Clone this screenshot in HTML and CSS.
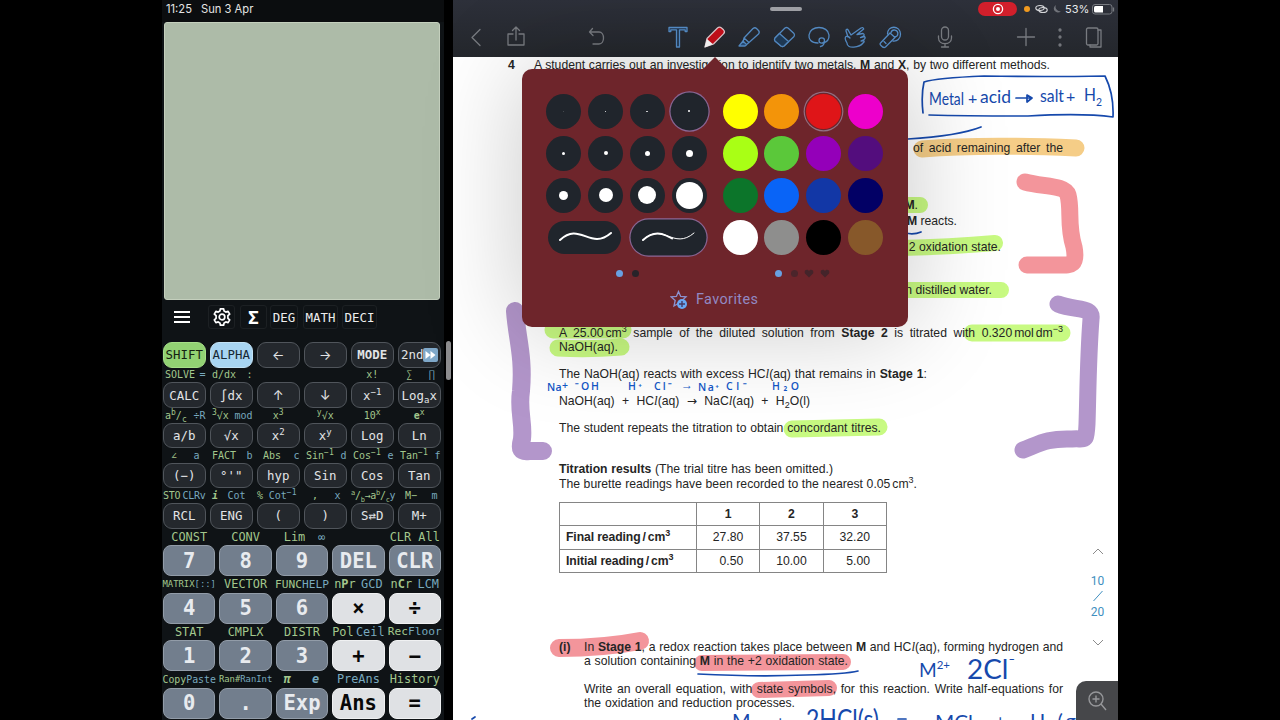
FILE: index.html
```html
<!DOCTYPE html>
<html lang="en">
<head>
    <meta charset="UTF-8">
    <meta name="viewport" content="width=device-width, initial-scale=1.0">
    <title>Calculator and notes</title>
    <link rel="stylesheet" href="styles.css">
</head>
<body>
    <!-- Calculator -->
    <aside class="calculator">
        <div class="clock"><span>11:25</span><span>Sun 3 Apr</span></div>
        <div class="screen"></div>
        <div class="modes">
            <button class="menu"><svg width="18" height="14" viewBox="0 0 18 14"><path d="M1 2h16M1 7h16M1 12h16" stroke="#fff" stroke-width="1.8"/></svg></button>
            <button class="mode-icon"><svg width="20" height="20" viewBox="0 0 20 20" fill="none" stroke="#fff" stroke-width="1.7" stroke-linejoin="round"><path d="M8.4 1.8h3.2l.5 2.3 1.7 1 2.3-.8 1.6 2.8-1.8 1.6v2.6l1.8 1.6-1.6 2.8-2.3-.8-1.7 1-.5 2.3H8.4l-.5-2.3-1.7-1-2.3.8-1.6-2.8 1.8-1.6V8.7L2.3 7.1l1.6-2.8 2.3.8 1.7-1z"/><circle cx="10" cy="10" r="2.8"/></svg></button>
            <button class="mode-icon sigma">Σ</button>
            <button>DEG</button>
            <button class="wide">MATH</button>
            <button class="wide">DECI</button>
        </div>

        <div class="keys small">
            <div class="key shift">SHIFT</div><div class="key alpha">ALPHA</div><div class="key arrow">←</div><div class="key arrow">→</div><div class="key bold">MODE</div>
            <div class="key second">2nd<svg width="15" height="14" viewBox="0 0 15 14"><rect width="15" height="14" rx="2" fill="#7fa8c9"/><path d="M2.5 3l5 4-5 4zM7.5 3l5 4-5 4z" fill="#fff"/></svg></div>

            <div class="label"><i>SOLVE</i><b>=</b></div><div class="label"><i>d/dx</i><i>:</i></div><div class="label"></div><div class="label"></div><div class="label mid"><i>x!</i></div><div class="label inset"><i>∑</i><b>∏</b></div>
            <div class="key">CALC</div><div class="key">∫dx</div><div class="key arrow">↑</div><div class="key arrow">↓</div><div class="key"><span>x<sup>−1</sup></span></div><div class="key"><span>Log<sub>a</sub>x</span></div>

            <div class="label"><i>a<sup>b</sup>/<sub>c</sub></i><b>÷R</b></div><div class="label"><i><sup>3</sup>√x</i><b>mod</b></div><div class="label mid"><i>x<sup>3</sup></i></div><div class="label mid"><i><sup>y</sup>√x</i></div><div class="label mid"><i>10<sup>x</sup></i></div><div class="label mid"><i><strong>e</strong><sup>x</sup></i></div>
            <div class="key">a/b</div><div class="key">√x</div><div class="key"><span>x<sup>2</sup></span></div><div class="key"><span>x<sup>y</sup></span></div><div class="key">Log</div><div class="key">Ln</div>

            <div class="label inset"><i>∠</i><b>a</b></div><div class="label"><i>FACT</i><b>b</b></div><div class="label abs"><i>Abs</i><b>c</b></div><div class="label"><i>Sin<sup>−1</sup></i><b>d</b></div><div class="label"><i>Cos<sup>−1</sup></i><b>e</b></div><div class="label"><i>Tan<sup>−1</sup></i><b>f</b></div>
            <div class="key">(−)</div><div class="key">°'"</div><div class="key">hyp</div><div class="key">Sin</div><div class="key">Cos</div><div class="key">Tan</div>

            <div class="label tight"><i>STO</i><b>CLRv</b></div><div class="label cot"><i><em>i</em></i><b>Cot</b></div><div class="label cot-inverse"><i>%</i><b>Cot<sup>−1</sup></b></div><div class="label inset"><i>,</i><b>x</b></div><div class="label tight"><i><sup>a</sup>/<sub>b</sub>→a<sup>b</sup>/<sub>c</sub></i><b>y</b></div><div class="label memory"><i>M−</i><b>m</b></div>
            <div class="key">RCL</div><div class="key">ENG</div><div class="key">(</div><div class="key">)</div><div class="key">S⇄D</div><div class="key">M+</div>
        </div>

        <div class="keys large">
            <div class="label mid"><i>CONST</i></div><div class="label mid"><i>CONV</i></div><div class="label lim"><i>Lim</i><b>∞</b></div><div class="label"></div><div class="label mid"><i>CLR All</i></div>
            <div class="key num">7</div><div class="key num">8</div><div class="key num">9</div><div class="key num">DEL</div><div class="key num">CLR</div>

            <div class="label mid tiny"><i>MATRIX</i><b>[::]</b></div><div class="label mid"><i>VECTOR</i></div><div class="label mid snug"><i>FUNC</i><b>HELP</b></div><div class="label"><i>n<strong>P</strong>r</i><b>GCD</b></div><div class="label"><i>n<strong>C</strong>r</i><b>LCM</b></div>
            <div class="key num">4</div><div class="key num">5</div><div class="key num">6</div><div class="key op">×</div><div class="key op">÷</div>

            <div class="label mid"><i>STAT</i></div><div class="label mid"><i>CMPLX</i></div><div class="label mid"><i>DISTR</i></div><div class="label tight"><i>Pol</i><b>Ceil</b></div><div class="label mid snug"><i>Rec</i><b>Floor</b></div>
            <div class="key num">1</div><div class="key num">2</div><div class="key num">3</div><div class="key op">+</div><div class="key op">−</div>

            <div class="label mid copy"><i>Copy</i><b>Paste</b></div><div class="label mid tiny"><i>Ran#</i><b>RanInt</b></div><div class="label power"><i><em>π</em></i><b><em>e</em></b></div><div class="label mid"><b>PreAns</b></div><div class="label mid"><i>History</i></div>
            <div class="key num">0</div><div class="key num">.</div><div class="key num">Exp</div><div class="key op">Ans</div><div class="key op">=</div>
        </div>
    </aside>

    <div class="divider"><span></span></div>

    <!-- Notes -->
    <main class="notes">
        <header class="topbar">
            <div class="status">
                <span class="handle"></span>
                <span class="recording"><svg width="12" height="12" viewBox="0 0 12 12"><circle cx="6" cy="6" r="4.6" fill="none" stroke="#fff" stroke-width="1.3"/><circle cx="6" cy="6" r="2" fill="#fff"/></svg></span>
                <span class="mic-dot"></span>
                <svg class="link" width="13" height="10" viewBox="0 0 13 10" fill="none" stroke="#d5d6d9" stroke-width="1.2"><ellipse cx="5" cy="4" rx="4.2" ry="2.5"/><ellipse cx="8" cy="6" rx="4.2" ry="2.5"/></svg>
                <svg class="moon" width="9" height="10" viewBox="0 0 9 10"><path d="M3 1a4 4 0 1 0 5 6A4.3 4.3 0 0 1 3 1z" fill="#70737a"/></svg>
                <span class="percent">53%</span>
                <svg class="battery" width="23" height="11" viewBox="0 0 23 11"><rect x=".5" y=".5" width="19.5" height="9.5" rx="2.5" fill="none" stroke="#777a80"/><path d="M3.5 2H11v6.500H3.500A1.500 1.500 0 0 1 2 7V3.500A1.500 1.500 0 0 1 3.500 2z" fill="#fff"/><path d="M21.5 3.5v4" stroke="#777a80" stroke-width="1.3"/></svg>
            </div>
            <nav class="tools">
                <svg class="grey" viewBox="0 0 24 24"><path d="M16 4.5L8 12.500l8 8"/></svg>
                <svg class="grey share" viewBox="0 0 24 24"><path d="M9 9H4v11h16V9h-5M12 15V2.500M8.500 5.500L12 2l3.500 3.500"/></svg>
                <svg class="grey undo" viewBox="0 0 24 24"><path d="M7.500 3.500L4.500 7l3.500 3.500M4.500 7H14c6 0 6 12 0 12H8"/></svg>
                <svg class="blue text-tool" viewBox="0 0 24 24"><path d="M3 2.500h18v4h-1.800V4.900h-5.700V22h-3V4.900H4.800v1.600H3z"/></svg>
                <svg class="pen" viewBox="0 0 24 24"><path d="M2 22l2-8.500L14.500 3q2-1.800 4 0l2 1.800q2 2 0 4L10.500 19z" fill="#c90f1b" stroke="#e6cfd3" stroke-width="1.200"/><path d="M1.500 22.500L4 14l6 5.300z" fill="#fff"/></svg>
                <svg class="blue" viewBox="0 0 24 24"><path d="M7 13L16 3.500q2-1.500 3.500 0l2 2q1.500 1.800 0 3.500L12 17.500zM7 13l-1 4 3 3 3-2.500"/><path d="M6 16l-4 5h6l1.500-1.500z" fill="#284f7a"/></svg>
                <svg class="blue" viewBox="0 0 24 24"><path d="M3 13L13 3q1.500-1 3 0l6 5.500q1 1.500 0 3L12 21q-1.500 1.200-3 0l-6-5q-1-1.500 0-3z"/><path d="M7.500 8.500l9 8L12 21q-1.500 1-3 0l-6-5q-1-1.500 0-3z" fill="#203c59"/></svg>
                <svg class="blue" viewBox="0 0 24 24"><path d="M11 18C4 18 1.500 14 2 10 3 0 21 0 22 10c.3 4-2 7-6 8"/><path d="M12 15.500c0-3.500 5.500-3.500 5.500 0s-5.500 3.500-5.500 0M17.500 15.500c0 3-1.500 5.500-4 6"/></svg>
                <svg class="blue" viewBox="0 0 24 24"><path d="M5 12L3 6q0-2 1.700-1.700L8 10l10-7q2.500-1 2.700 1L14 9.500l6-1q2 1 .5 2.500l-3 1.500 4-1q1.500 1.500-.5 3l-3 1.500 2.500-.5q1.500 1-.5 2.500C17 22 4 25 4 18q-3-5-1-6.500 2-1 4 1.500"/></svg>
                <svg class="blue" viewBox="0 0 24 24"><path d="M2.500 18L12 8l5 4.500-9.500 9.500q-2 1.500-4.500-1.500-1.500-1.500-.5-2.500z"/><path d="M9.500 9c0-9 12.500-9 13 0 .1 5-3.500 7.500-7.500 7M13 7.500a3.500 3.500 0 1 1 3.500 4.500M6 16.500l2 2"/></svg>
                <svg class="grey mic" viewBox="0 0 24 24"><rect x="8.500" y="2" width="7" height="13" rx="3.500"/><path d="M5.500 11v2c0 7.500 13 7.500 13 0v-2M12 19v3M8.500 22h7"/></svg>
                <svg class="grey plus" viewBox="0 0 24 24"><path d="M12 3.500v17M3.500 12h17"/></svg>
                <svg class="grey dots" viewBox="0 0 24 24"><circle cx="12" cy="5" r="1"/><circle cx="12" cy="12" r="1"/><circle cx="12" cy="20" r="1"/></svg>
                <svg class="grey pages" viewBox="0 0 24 24"><rect x="4.500" y="3" width="11.500" height="17" rx="1.500"/><path d="M16 5h3v17H8v-2"/></svg>
            </nav>
        </header>

        <section class="paper">
            <!-- highlighter strokes, under the text -->
            <svg class="highlights" viewBox="453 57 665 663">
                <g class="green">
                    <path d="M900 205h20M900 248q50-1 95-5M900 290h101" stroke-width="16"/>
                    <path d="M553 330h70M558 348q30 2 63-1" stroke-width="17"/>
                    <path d="M972 333h90M792 429l87-2" stroke-width="17"/>
                </g>
                <path class="orange" d="M922 149q60-5 154-1" stroke-width="17"/>
                <g class="pink">
                    <path d="M1025 182c18 5 40 3 43 13 4 15-1 30 6 52 4 20-5 18-15 18h-32" stroke-width="17"/>
                    <path d="M559 648q45 0 81-7" stroke-width="18"/>
                    <path d="M702 663l141-1M759 690l70-2" stroke-width="16"/>
                </g>
                <g class="purple">
                    <path d="M515 311c2 28 9 45 6 80-3 20 3 32 1 48-3 11-1 13 7 12h14" stroke-width="18"/>
                    <path d="M1058 304c18 7 35 2 33 15-3 40-3 75-4 105-1 19-1 14-15 15-25-1-33 5-49 11" stroke-width="17"/>
                </g>
            </svg>

            <div class="text">
                <p class="question"><strong>4</strong><span>A student carries out an investigation to identify two metals, <strong>M</strong> and <strong>X</strong>, by two different methods.</span></p>
                <p class="acid">of acid remaining after the</p>
                <p class="stage-m"><strong>M</strong>.</p>
                <p class="reacts"><strong>M</strong> reacts.</p>
                <p class="state">2 oxidation state.</p>
                <p class="water">n distilled water.</p>
                <p class="sample">A 25.00<s></s>cm<sup>3</sup> sample of the diluted solution from <strong>Stage 2</strong> is titrated with 0.320<s></s>mol<s></s>dm<sup>−3</sup></p>
                <p>NaOH(aq).</p>
                <p class="para reaction">The NaOH(aq) reacts with excess HC<em>l</em>(aq) that remains in <strong>Stage 1</strong>:</p>
                <p class="para equation">NaOH(aq) + HC<em>l</em>(aq) <span class="yields">→</span> NaC<em>l</em>(aq) + H<sub>2</sub>O(l)</p>
                <p class="para repeats">The student repeats the titration to obtain concordant titres.</p>
                <p class="results"><strong>Titration results</strong> (The trial titre has been omitted.)</p>
                <p class="burette">The burette readings have been recorded to the nearest 0.05<s></s>cm<sup>3</sup>.</p>
                <table>
                    <tr><th></th><th>1</th><th>2</th><th>3</th></tr>
                    <tr><th>Final reading<s></s>/<s></s>cm<sup>3</sup></th><td>27.80</td><td>37.55</td><td>32.20</td></tr>
                    <tr><th>Initial reading<s></s>/<s></s>cm<sup>3</sup></th><td>0.50</td><td>10.00</td><td>5.00</td></tr>
                </table>
                <div class="part">
                    <strong>(i)</strong>
                    <div>
                        <p class="full">In <strong>Stage 1</strong>, a redox reaction takes place between <strong>M</strong> and HC<em>l</em>(aq), forming hydrogen and</p>
                        <p class="containing">a solution containing <strong>M</strong> in the +2 oxidation state.</p>
                        <p class="full write">Write an overall equation, with state symbols, for this reaction. Write half-equations for</p>
                        <p class="processes">the oxidation and reduction processes.</p>
                    </div>
                </div>
            </div>

            <!-- pen notes -->
            <svg class="ink" viewBox="453 57 665 663">
                <path d="M923 113q-2-18 1-31 12-4 60-6 60 1 121 0 9 18 8 41-30-4-85-1-60 0-99-1M908 139q50-3 73-12M905 233q9 2 16-1M698 674q60 3 108 1 40-1 52-4"/>
                <text x="929" y="105" font-size="17" textLength="35" lengthAdjust="spacingAndGlyphs">Metal</text>
                <text x="968" y="104" font-size="16">+</text>
                <text x="980" y="103" font-size="17" textLength="31" lengthAdjust="spacingAndGlyphs">acid</text>
                <path d="M1016 98h15m-4-3l5 3-5 4z"/>
                <text x="1040" y="102" font-size="18" textLength="24" lengthAdjust="spacingAndGlyphs">salt</text>
                <text x="1066" y="102" font-size="16">+</text>
                <text x="1084" y="101" font-size="18" textLength="18" lengthAdjust="spacingAndGlyphs">H<tspan font-size="12" dy="5">2</tspan></text>
                <g class="small-ink">
                    <text x="547" y="391" font-size="10.5" textLength="21">Na<tspan dy="-2">+</tspan></text>
                    <text x="575" y="390" font-size="10.5" textLength="24">⁻OH</text>
                    <text x="628" y="390" font-size="10.5" textLength="14">H⁺</text>
                    <text x="654" y="390" font-size="10.5" textLength="18">Cl⁻</text>
                    <text x="681" y="389" font-size="12" textLength="12">→</text>
                    <text x="698" y="391" font-size="10.5" textLength="21">Na⁺</text>
                    <text x="726" y="390" font-size="10.5" textLength="21">Cl⁻</text>
                    <text x="772" y="390" font-size="10.5" textLength="27">H₂O</text>
                </g>
                <text x="919" y="677" font-size="20" textLength="31" lengthAdjust="spacingAndGlyphs">M<tspan font-size="12" dy="-8">2+</tspan></text>
                <text x="967" y="679" font-size="27" textLength="48" lengthAdjust="spacingAndGlyphs">2Cl<tspan font-size="19" dy="-7">⁻</tspan></text>
                <text x="732" y="728" font-size="20">M</text>
                <text x="775" y="729" font-size="18">+</text>
                <text x="806" y="729" font-size="26" textLength="73" lengthAdjust="spacingAndGlyphs">2HCl(s)</text>
                <path d="M898 719h8M472 719l3-2"/>
                <text x="935" y="729" font-size="20" textLength="38" lengthAdjust="spacingAndGlyphs">MCl</text>
                <text x="995" y="728" font-size="18">+</text>
                <text x="1030" y="728" font-size="20" textLength="54">H₂(g)</text>
            </svg>

            <div class="page-nav">
                <svg width="12" height="8" viewBox="0 0 12 8"><path d="M1 7l5-5 5 5"/></svg>
                <span class="current">10</span>
                <svg width="12" height="12" viewBox="0 0 12 12"><path class="slash" d="M1.500 11L10.500 1"/></svg>
                <span class="total">20</span>
                <svg width="12" height="8" viewBox="0 0 12 8"><path d="M1 1l5 5 5-5"/></svg>
            </div>
            <div class="zoom-button"><svg width="22" height="22" viewBox="0 0 22 22" fill="none" stroke="#96979a" stroke-width="1.4"><circle cx="10" cy="9" r="7"/><path d="M15 14l5 6M10 5.500v7M6.500 9h7"/></svg></div>
        </section>

        <!-- pen settings popup -->
        <div class="popup">
            <div class="pickers">
                <div class="sizes">
                    <span class="size s1"></span><span class="size s2"></span><span class="size s3"></span><span class="size s4 selected"></span>
                    <span class="size s5"></span><span class="size s6"></span><span class="size s7"></span><span class="size s8"></span>
                    <span class="size s9"></span><span class="size s10"></span><span class="size s11"></span><span class="size s12"></span>
                    <span class="stroke"><svg width="54" height="14" viewBox="0 0 54 14"><path d="M2 10C22-9 32 21 53 3" fill="none" stroke="#fff" stroke-width="2" stroke-linecap="round"/></svg></span>
                    <span class="stroke selected"><svg width="54" height="14" viewBox="0 0 54 14"><path d="M2 10C22-9 32 21 53 3" fill="none" stroke="#fff" stroke-linecap="round"/><path d="M2 10Q13 0 25 5.500L31 8.500" fill="none" stroke="#fff" stroke-width="1.900" stroke-linecap="round"/></svg></span>
                </div>
                <div class="colours">
                    <span class="yellow"></span><span class="amber"></span><span class="red selected"></span><span class="magenta"></span>
                    <span class="lime"></span><span class="leaf"></span><span class="violet"></span><span class="indigo"></span>
                    <span class="forest"></span><span class="azure"></span><span class="cobalt"></span><span class="navy"></span>
                    <span class="white"></span><span class="gray"></span><span class="black"></span><span class="brown"></span>
                </div>
            </div>
            <div class="pager">
                <div><span class="on"></span><span></span></div>
                <div><span class="on"></span><span class="faint"></span>
                    <svg width="10" height="9" viewBox="0 0 10 9"><path d="M5 8.500L1 4.500C-.5 1 3.500-.5 5 2 6.500-.5 10.500 1 9 4.500z"/></svg>
                    <svg width="10" height="9" viewBox="0 0 10 9"><path d="M5 8.500L1 4.500C-.5 1 3.500-.5 5 2 6.500-.5 10.500 1 9 4.500z"/></svg>
                </div>
            </div>
            <div class="favorites">
                <svg width="18" height="20" viewBox="0 0 18 20"><path d="M8.500 1.500l2.200 5 5.300.4-4 3.600 1.200 5.500-4.700-2.800L4 16l1.200-5.500-4-3.600 5.200-.4z" fill="none" stroke="#8c92cf" stroke-width="1.300"/><circle cx="12" cy="14" r="5" fill="#69a8f4"/><path d="M12 11v6M9 14h6" stroke="#453a65" stroke-width="1.400"/></svg>
                <span>Favorites</span>
            </div>
        </div>
    </main>
</body>
</html>
```
FILE: styles.css
```css
* {
    box-sizing: border-box;
}

body {
    margin: 0;
    width: 1280px;
    height: 720px;
    overflow: hidden;
    display: flex;
    background: #000;
    font-family: "Liberation Sans", Arial, sans-serif;
}

p {
    margin: 0;
}

sup, sub {
    line-height: 0;
}

/* Calculator */
.calculator {
    width: 282px;
    margin-left: 162px;
    height: 720px;
    overflow: hidden;
    background: #0f1316;
    font-family: "DejaVu Sans Mono", monospace;
}

.clock {
    height: 22px;
    padding: 3px 0 0 4px;
    display: flex;
    gap: 9px;
    background: #0b0d0f;
    color: #e4e4e4;
    font: 11.2px/13px Inter, sans-serif;
}

.screen {
    height: 278px;
    margin: 0 4px 0 2px;
    border: 1px solid #c4cfbd;
    border-radius: 3px;
    background: #adbba8;
}

.modes {
    display: flex;
    align-items: center;
    gap: 5px;
    height: 34px;
    margin: 0 0 8px 7px;
}

.modes button {
    width: 28px;
    height: 24px;
    padding: 0;
    display: flex;
    align-items: center;
    justify-content: center;
    border: 1px solid #1c2023;
    border-radius: 3px;
    background: transparent;
    color: #eee;
    font: 12.4px "DejaVu Sans Mono", monospace;
}

.modes .menu {
    width: 26px;
    margin-right: 8px;
    border: 0;
}

.modes .mode-icon {
    width: 27px;
}

.modes .sigma {
    margin-right: -2px;
    font-size: 18px;
    font-weight: bold;
    color: #fff;
}

.modes .wide {
    width: 35px;
}

.modes .wide + .wide {
    margin-left: -1px;
}

.keys {
    display: grid;
    width: 278px;
    margin-left: 1px;
    color: #e2e4e6;
}

.keys.small {
    grid-template-columns: repeat(6, 42.5px);
    grid-template-rows: 25.6px repeat(4, 14.7px 25.6px);
    column-gap: 4.5px;
}

.keys.large {
    grid-template-columns: repeat(5, 52.4px);
    grid-template-rows: repeat(4, 16.5px 31px);
    column-gap: 4px;
}

.key {
    display: flex;
    align-items: center;
    justify-content: center;
    border: 1.5px solid #50555b;
    border-radius: 9px;
    background: #24282d;
    font-size: 12.4px;
    white-space: nowrap;
}

.key sup, .key sub {
    font-size: 9px;
}

.shift {
    background: #92d273;
    border-color: #a6df88;
    color: #152010;
}

.alpha {
    background: #a8d5f2;
    border-color: #c3e3f6;
    color: #152733;
}

.bold {
    font-weight: bold;
}

.key.arrow {
    font-family: Inter, sans-serif;
    font-size: 13px;
}

.second {
    padding-left: 1px;
}

.large .key {
    font-size: 20.5px;
    font-weight: bold;
    border-radius: 8px;
}

.large .num {
    background: #727e8d;
    border-color: #929ca8;
    color: #e8ebef;
}

.large .op {
    background: #dfe1e4;
    border-color: #f0f1f2;
    color: #080808;
}

/* green text is shift, blue text is alpha */
.label {
    display: flex;
    align-items: center;
    justify-content: space-between;
    padding: 0 0 0 2px;
    font-size: 10px;
    color: #a3c78d;
    white-space: nowrap;
}

.label i, .label b {
    font-style: normal;
    font-weight: normal;
}

.label b {
    color: #78a9be;
}

.label em {
    font-weight: bold;
}

.label sup, .label sub {
    font-size: 8px;
}

.large .label {
    padding: 0 2px;
    font-size: 11.9px;
}

.large .label.mid,
.label.mid {
    justify-content: center;
    padding: 0;
}

.label.inset {
    padding: 0 6px 0 8px;
}

.label.abs {
    padding-left: 6px;
}

.label.cot {
    padding-right: 7px;
}

.label.cot-inverse {
    padding: 0 3px 0 0;
}

.label.memory {
    padding: 0 3px 0 7px;
}

.large .label.tight,
.label.tight {
    padding: 0;
}

.small .label.tight {
    letter-spacing: -0.3px;
}

.label.tight sup, .label.tight sub {
    font-size: 7px;
}

.large .label.lim {
    padding: 0 3px 0 8px;
}

.large .label.power {
    padding: 0 9px 0 8px;
}

.large .tiny {
    font-size: 8.9px;
}

.large .copy {
    font-size: 9.9px;
}

.large .snug {
    font-size: 11.2px;
}

.divider {
    width: 9px;
    padding: 341px 0 0 2px;
}

.divider span {
    display: block;
    width: 5px;
    height: 39px;
    border-radius: 3px;
    background: #8d8d8f;
}

/* Notes app */
.notes {
    position: relative;
    width: 665px;
    height: 720px;
    background: #fff;
}

.topbar {
    height: 57px;
    background: linear-gradient(#2d303a, #24272c);
}

.status {
    display: flex;
    align-items: center;
    height: 18px;
}

.handle {
    width: 32px;
    height: 4px;
    margin-left: 317px;
    border-radius: 2px;
    background: #a2a3a8;
}

.recording {
    display: flex;
    align-items: center;
    justify-content: center;
    width: 39px;
    height: 14px;
    margin-left: 176px;
    border-radius: 7px;
    background: #d11f2b;
}

.mic-dot {
    width: 6px;
    height: 6px;
    margin-left: 7px;
    border-radius: 50%;
    background: #f19a1f;
}

.link {
    margin-left: 5px;
}

.moon {
    margin-left: 5px;
}

.percent {
    margin-left: 3px;
    width: 25px;
    color: #e9eaec;
    font: 11px Inter, sans-serif;
}

.battery {
    margin-left: 2px;
}

.tools {
    display: flex;
    gap: 11.2px;
    margin: 7px 0 0 11px;
}

.tools svg {
    flex: none;
    width: 24px;
    height: 24px;
    fill: none;
    stroke-width: 1.3;
    stroke-linejoin: round;
    stroke-linecap: round;
}

.tools .grey {
    stroke: #787b80;
}

.tools .blue {
    stroke: #5790cb;
}

.tools .text-tool {
    fill: #20354d;
    margin-left: 45px;
}

.share { margin-left: 5px; }
.undo { margin-left: 46px; }
.tools .pen { margin-left: 2px; }
.tools .pen + .blue { margin-left: -1px; }
.mic { margin-left: 20px; }
.plus { margin-left: 46px; }
.dots { margin-left: -1px; }
.pages { margin-left: -1px; }

.paper {
    position: relative;
    height: 663px;
    overflow: hidden;
}

.highlights, .ink {
    position: absolute;
    left: 0;
    top: 0;
    width: 665px;
    height: 663px;
    fill: none;
    stroke-linecap: round;
    stroke-linejoin: round;
}

.green { stroke: #c8fa82; }
.orange { stroke: #f5cd87; }
.pink { stroke: #f3959b; }
.purple { stroke: #b396cb; }

.ink {
    stroke: #1649ac;
    stroke-width: 1.7;
}

.ink text {
    fill: #1649ac;
    stroke: none;
    font-family: Lato, sans-serif;
}

.ink .small-ink text {
    fill: #1458c8;
    font-family: "Open Sans", sans-serif;
    font-weight: 600;
}

.text {
    position: relative;
    padding: 1px 55px 0 106px;
    font-size: 12.2px;
    line-height: 14px;
    color: #252525;
    white-space: nowrap;
}

.text sup, .text sub {
    font-size: 9px;
}

.text em {
    font-family: "Liberation Serif", serif;
    font-size: 13px;
}

/* thin space between a number and its unit */
.text s {
    display: inline-block;
    width: 2px;
}

.question {
    display: flex;
    margin-left: -51px;
}

.question > strong {
    width: 26px;
}

.question > span {
    width: 516px;
    text-align-last: justify;
}

.acid {
    width: 150px;
    margin: 69px 0 0 auto;
    text-align-last: justify;
}

.stage-m {
    margin: 43px 145px 0 0;
    text-align: right;
}

.reacts {
    margin: 2px 106px 0 0;
    text-align: right;
}

.state {
    margin: 12px 62px 0 0;
    text-align: right;
}

.water {
    margin: 29px 71px 0 0;
    text-align: right;
}

.sample {
    margin-top: 29px;
    text-align-last: justify;
}

.para {
    margin-top: 13px;
}

.reaction {
    width: 368px;
    text-align-last: justify;
}

.equation {
    width: 251px;
    text-align-last: justify;
}

.yields {
    font-family: "DejaVu Sans", sans-serif;
    line-height: 0;
}

.repeats {
    width: 322px;
    text-align-last: justify;
}

.results {
    width: 274px;
    margin-top: 27px;
    text-align-last: justify;
}

.burette {
    width: 358px;
    margin-top: 1px;
    text-align-last: justify;
}

.text table {
    width: 328px;
    height: 71px;
    margin-top: 11px;
    table-layout: fixed;
    border-collapse: collapse;
    font-size: 12.2px;
}

.text th, .text td {
    padding: 0;
    border: 1px solid #858585;
    text-align: center;
}

.text th:first-child {
    width: 137px;
    padding-left: 6px;
    text-align: left;
    letter-spacing: -0.1px;
}

.text td {
    padding-right: 16px;
    text-align: right;
}

.part {
    display: flex;
    margin-top: 67px;
}

.part > strong {
    width: 25px;
}

.part > div {
    width: 479px;
}

.full {
    text-align-last: justify;
}

.containing {
    width: 264px;
    text-align-last: justify;
}

.write {
    margin-top: 14px;
}

.processes {
    width: 211px;
    text-align-last: justify;
}

.page-nav {
    position: absolute;
    right: 12px;
    top: 490px;
    width: 17px;
    display: flex;
    flex-direction: column;
    align-items: center;
    color: #3f8fc0;
    font: 12px/14px Roboto, sans-serif;
}

.page-nav path {
    fill: none;
    stroke: #8b8b8b;
}

.page-nav .slash {
    stroke: #3f8fc0;
}

.page-nav .current {
    margin: 19px 0 2px;
}

.page-nav .total {
    margin: 3px 0 20px;
}

.zoom-button {
    position: absolute;
    right: 0;
    bottom: 0;
    width: 42px;
    height: 39px;
    display: flex;
    align-items: center;
    justify-content: center;
    border-radius: 10px 0 0 0;
    background: #46474a;
}

/* Popup */
.popup {
    position: absolute;
    left: 69px;
    top: 69px;
    width: 386px;
    height: 258px;
    padding: 21px 20px 0 21px;
    border-radius: 10px;
    background: #6e252b;
    box-shadow: 0 0 100px rgba(0, 0, 0, 0.22);
}

.popup::before {
    content: "";
    position: absolute;
    left: 181px;
    top: -12px;
    border: 12px solid transparent;
    border-top: 0;
    border-bottom-color: #6e252b;
}

.pickers {
    display: flex;
    gap: 9px;
}

.sizes, .colours {
    display: grid;
    grid-template-columns: repeat(4, 41.8px);
    grid-template-rows: repeat(4, 42px);
    place-items: center;
}

.size, .colours span {
    width: 35px;
    height: 35px;
    border-radius: 50%;
}

.size {
    display: flex;
    align-items: center;
    justify-content: center;
    background: #20252c;
}

.size::after {
    content: "";
    border-radius: 50%;
    background: #fff;
}

.s1::after { width: 1px; height: 1px; background: #50555a; }
.s2::after { width: 1px; height: 1px; }
.s3::after { width: 2px; height: 1px; }
.s4::after { width: 2px; height: 2px; }
.s5::after { width: 3px; height: 3px; }
.s6::after { width: 4px; height: 4px; }
.s7::after { width: 5px; height: 5px; }
.s8::after { width: 7px; height: 7px; }
.s9::after { width: 9px; height: 9px; }
.s10::after { width: 14px; height: 14px; }
.s11::after { width: 18px; height: 18px; }
.s12::after { width: 27px; height: 27px; }

.stroke {
    grid-column: span 2;
    display: flex;
    align-items: center;
    justify-content: center;
    width: 73px;
    height: 33px;
    border-radius: 17px;
    background: #20252c;
}

.size.selected, .stroke.selected {
    box-shadow: 0 0 0 1.5px #20252c, 0 0 0 2.7px #8a6796;
}

.colours .selected {
    box-shadow: 0 0 0 1.2px #6e252b, 0 0 0 2.4px #927084;
}

.yellow { background: #ffff00; }
.amber { background: #f39409; }
.red { background: #df1518; }
.magenta { background: #ed00cb; }
.lime { background: #a9ff15; }
.leaf { background: #5bc83a; }
.violet { background: #9400b9; }
.indigo { background: #530d7d; }
.forest { background: #0c752a; }
.azure { background: #0964f7; }
.cobalt { background: #1237a6; }
.navy { background: #020065; }
.white { background: #fff; }
.gray { background: #8e8e8d; }
.black { background: #000; }
.brown { background: #87582a; }

.pager {
    display: flex;
    gap: 136px;
    height: 9px;
    margin: 11px 0 0 73px;
}

.pager div {
    display: flex;
    align-items: center;
    gap: 9px;
}

.pager div + div {
    gap: 6px;
}

.pager div + div .faint {
    margin-left: 3px;
}

.pager span {
    width: 7px;
    height: 7px;
    border-radius: 50%;
    background: #272329;
}

.pager .on {
    background: #68a1e2;
}

.pager .faint {
    background: #4b252b;
}

.pager path {
    fill: #44242a;
}

.favorites {
    display: flex;
    align-items: center;
    gap: 8px;
    margin: 12px 0 0 127px;
    color: #9289c3;
    font: 14.4px/20px Roboto, sans-serif;
    letter-spacing: 0.4px;
}
```
